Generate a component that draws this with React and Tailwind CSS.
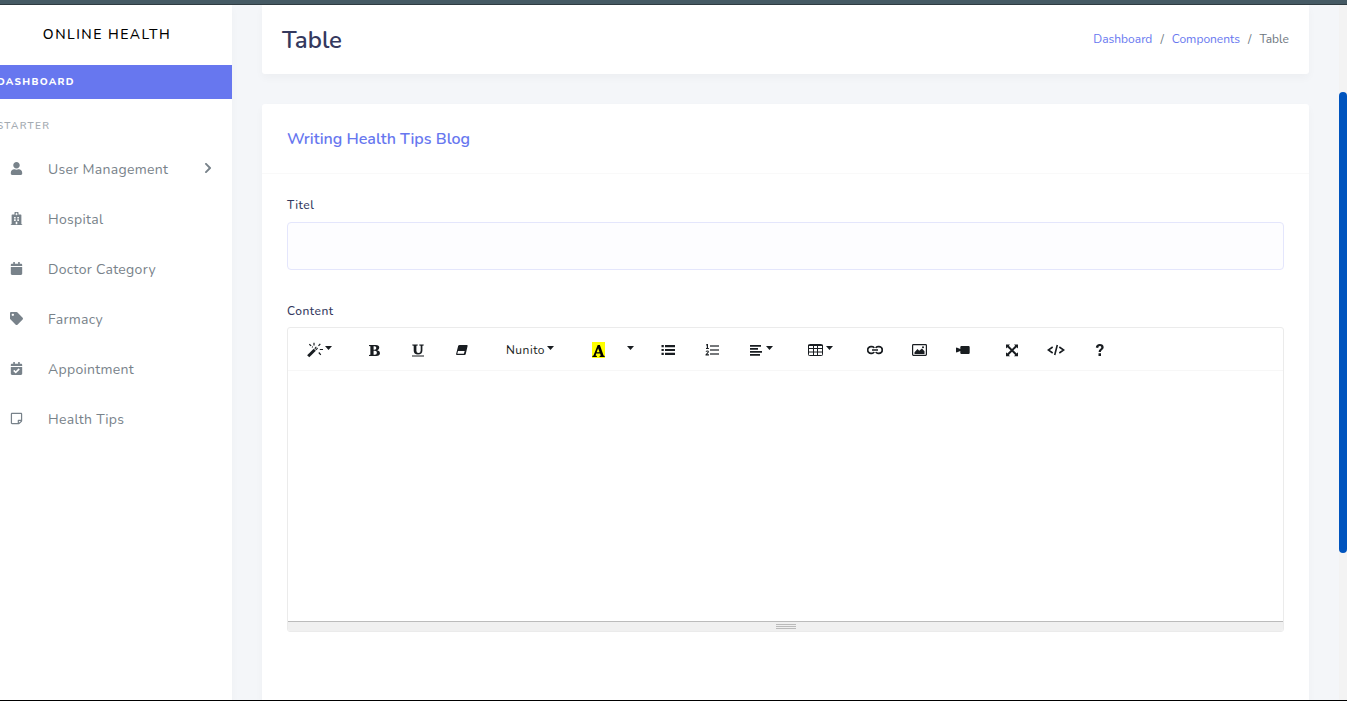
import React from "react";
import {
  FaUser,
  FaHospital,
  FaCalendar,
  FaTag,
  FaCalendarCheck,
  FaRegStickyNote,
  FaChevronRight,
} from "react-icons/fa";

const navItems = [
  { label: "User Management", icon: FaUser, expandable: true },
  { label: "Hospital", icon: FaHospital },
  { label: "Doctor Category", icon: FaCalendar },
  { label: "Farmacy", icon: FaTag },
  { label: "Appointment", icon: FaCalendarCheck },
  { label: "Health Tips", icon: FaRegStickyNote },
];

function Glyph({ children, className = "h-[14px] w-[14px]" }) {
  return (
    <svg viewBox="0 0 14 14" className={className} fill="currentColor" aria-hidden="true">
      {children}
    </svg>
  );
}

function Caret() {
  return (
    <svg viewBox="0 0 7 4" className="mb-1 h-1 w-[7px]" fill="currentColor" aria-hidden="true">
      <path d="M0 0h7L3.500 4z" />
    </svg>
  );
}

function Tool({ label, className = "w-11", children }) {
  return (
    <button
      type="button"
      aria-label={label}
      className={`flex h-8 items-center justify-center ${className}`}
    >
      {children}
    </button>
  );
}

function Group({ children }) {
  return <div className="flex">{children}</div>;
}

function Toolbar() {
  return (
    <div className="flex flex-wrap gap-[5px] border-b border-[#f7f7f7] px-1 pt-[6px] pb-1 text-[#191d21]">
      <Group>
        <Tool label="Style" className="w-[55px] gap-px">
          <svg viewBox="0 0 17 16" className="h-4 w-[17px]" fill="none" stroke="currentColor" aria-hidden="true">
            <path d="M1.200 14.300 7.800 7.700" strokeWidth="3" />
            <path d="M8.300 7.200 10 5.500" strokeWidth="2.800" />
            <path d="M8.600 6.900 10 5.500" stroke="white" strokeWidth="1" />
            <path d="M7 .8v2.700M2.300 2.300l1.900 1.600M13.300 1.800l-1.800 2M12.800 7.500h3.200M11.800 10.500l2 2.300M5 4.700l.8.600" strokeWidth="1.200" />
          </svg>
          <Caret />
        </Tool>
      </Group>
      <Group>
        <Tool label="Bold">
          <span className="font-['Liberation_Serif',serif] text-base font-black">
            <svg viewBox="0 0 12 12" className="h-[11px] w-[11px]" fill="currentColor" aria-hidden="true">
              <path
                fillRule="evenodd"
                d="M0 0h7.500Q11.200 0 11.200 2.900q0 2-2.200 2.700Q12 6.200 12 8.700 12 12 7.800 12H0v-1l1.500-.4V1.400L0 1zM5 1.300v3.800h1.200Q8 5.100 8 3.200 8 1.300 6.200 1.300zM5 6.400v4.200h1.500q2.100 0 2.100-2.100T6.500 6.400z"
              />
            </svg>
          </span>
        </Tool>
        <Tool label="Underline">
          <svg viewBox="0 0 12 13" className="h-[13px] w-3" fill="currentColor" aria-hidden="true">
            <path d="M.3.500h5.400v1l-1.300.3v5q0 2.300 2 2.300 2.300 0 2.300-2.500V1.800L7.300 1.500v-1h4.400v1l-1.300.3v4.700q0 3.900-4.400 3.900-4.300 0-4.300-3.600v-5L.3 1.500zM0 11.500h12v1H0z" />
          </svg>
        </Tool>
        <Tool label="Remove font style">
          <Glyph>
            <path
              fillRule="evenodd"
              d="M4.700 2h7.200q1 0 .7 1L10.700 11.200q-.3.800-1.200.8H1.900q-1 0-.8-1L3.200 2.800Q3.600 2 4.700 2zM3 8 2.300 10.800h6.500L9.700 8z"
            />
          </Glyph>
        </Tool>
      </Group>
      <Group>
        <Tool label="Font family" className="w-[82px] gap-[2px] text-xs tracking-[0.5px]">
          Nunito
          <Caret />
        </Tool>
      </Group>
      <Group>
        <Tool label="Recent color">
          <span className="mb-px flex h-4 w-[13px] items-end justify-center bg-[#ffff00] text-black">
            <svg viewBox="0 0 13 14" className="h-[14px] w-[13px]" fill="currentColor" aria-hidden="true">
              <path
                fillRule="evenodd"
                d="M5.700 1h2.200l3.700 10.500 1.100.4v1H7.600v-1l1.200-.3-.7-2H4.200l-.6 1.900 1.300.4v1H.3v-1l1.200-.4zM6.100 4.300 4.700 8.300h2.900z"
              />
            </svg>
          </span>
        </Tool>
        <Tool label="More color" className="w-[21px]">
          <Caret />
        </Tool>
      </Group>
      <Group>
        <Tool label="Unordered list">
          <Glyph>
            <path d="M4 2h10v2.200H4zM4 5.900h10v2.200H4zM4 9.800h10V12H4zM.5 2h2.300v2.200H.5zM.5 5.900h2.300v2.200H.5zM.5 9.800h2.300V12H.5z" />
          </Glyph>
        </Tool>
        <Tool label="Ordered list">
          <Glyph>
            <path d="M5 2h9v2H5zM5 6h9v2H5zM5 10h9v2H5z" opacity=".6" />
            <path d="M1 1.600 2.200 1H3v4h.9v1H1V5h.8V2.300L1 2.600zM.6 8.600q.4-1.100 1.800-1.100 1.500 0 1.500 1.200 0 .9-1.700 2.500H4v1.200H.5v-1q2.200-2 2.200-2.600 0-.5-.5-.5-.5 0-.7.600z" />
          </Glyph>
        </Tool>
        <Tool label="Paragraph" className="w-[53px] gap-[3px]">
          <Glyph>
            <path d="M1 2h11v1.800H1zM1 5h8v1.800H1zM1 8h12v1.800H1zM1 11h10v1.800H1z" />
          </Glyph>
          <Caret />
        </Tool>
      </Group>
      <Group>
        <Tool label="Table" className="w-14 gap-[3px]">
          <svg viewBox="0 0 15 12" className="h-3 w-[15px]" fill="none" stroke="currentColor" aria-hidden="true">
            <rect x=".5" y=".5" width="14" height="11" rx=".8" />
            <path d="M5.500 0v12M9.500 0v12M0 1.500h15M0 4.500h15M0 8h15" />
          </svg>
          <Caret />
        </Tool>
      </Group>
      <Group>
        <Tool label="Link">
          <svg viewBox="0 0 16 10" className="h-[10px] w-4" fill="none" stroke="currentColor" strokeWidth="1.700" aria-hidden="true">
            <path d="M7.200 3Q6.600 1.700 5 1.700H4a3.200 3.200 0 0 0 0 6.600h1q1.600 0 2.200-1.300M8.800 7q.6 1.300 2.200 1.300h1a3.200 3.200 0 0 0 0-6.600h-1Q9.400 1.700 8.800 3M5 5h6" />
          </svg>
        </Tool>
        <Tool label="Picture">
          <svg viewBox="0 0 15 12" className="h-3 w-[15px]" fill="currentColor" aria-hidden="true">
            <rect x=".6" y=".6" width="13.800" height="10.800" rx=".8" fill="none" stroke="currentColor" strokeWidth="1.200" />
            <path d="M2.500 10V8.300L5.500 5l1.700 1.800L10 4.400l2.500 2.800V10z" />
            <circle cx="11" cy="3.300" r="1" />
          </svg>
        </Tool>
        <Tool label="Video">
          <Glyph>
            <path d="M5.500 3h7q1.200 0 1.200 1.200v5.600q0 1.200-1.200 1.200h-7q-1.200 0-1.200-1.200V8L.6 9.500Q0 9.500 0 8.800V5.200q0-.7.6-.7L4.300 6V4.200Q4.300 3 5.500 3z" />
          </Glyph>
        </Tool>
      </Group>
      <Group>
        <Tool label="Full screen">
          <Glyph>
            <path d="M1 1.500h4L3.800 2.800 7 6l3.200-3.200L9 1.500h4v4l-1.300-1.200L8.400 7.300l3.300 3.100L13 9.200v4H9l1.200-1.300L7 8.700l-3.200 3.200L5 13.200H1v-4l1.300 1.200 3.300-3.100-3.300-3L1 5.500z" />
          </Glyph>
        </Tool>
        <Tool label="Code view">
          <svg viewBox="0 0 18 12" className="h-3 w-[18px]" fill="none" stroke="currentColor" strokeWidth="1.600" aria-hidden="true">
            <path d="M5.700 3 1.300 6l4.400 3M12.300 3l4.400 3-4.400 3M10.300 1 7.700 11" />
          </svg>
        </Tool>
        <Tool label="Help">
          <Glyph>
            <path d="M2.800 4.500Q3.200 1 6.800 1t3.900 3.200q0 1.700-1.700 2.800-1.200.8-1.200 2H5.600q0-2 1.500-3 1.200-.8 1.200-1.700Q8.300 3 6.800 3T5.200 5zM5.500 10.300H8V13H5.500z" />
          </Glyph>
        </Tool>
      </Group>
    </div>
  );
}

function Sidebar() {
  return (
    <aside className="-ml-[18px] w-[250px] shrink-0 bg-white shadow-[0_4px_8px_rgba(0,0,0,0.03)]">
      <a
        href="#home"
        className="flex h-[60px] items-center justify-center text-sm font-medium tracking-[1.5px] text-black uppercase"
      >
        Online Health
      </a>
      <a
        href="#dashboard"
        className="flex h-[34px] items-center bg-[#6777ef] px-[15px] text-[10px] font-extrabold tracking-[1.3px] text-white uppercase"
      >
        Dashboard
      </a>
      <h2 className="flex h-[46px] items-center px-[15px] pt-2 text-[10px] font-semibold tracking-[1.3px] text-[#a4abb2] uppercase">
        Starter
      </h2>
      <nav>
        <ul>
          {navItems.map(({ label, icon: Icon, expandable }) => (
            <li key={label}>
              <a href="#nav" className="flex h-[50px] items-center pr-5 pl-7 text-[#78828a]">
                <Icon className="mr-[25px] mb-1 h-[13px] w-[13px]" />
                <span className="text-sm tracking-[0.3px]">{label}</span>
                {expandable && <FaChevronRight className="mb-1 ml-auto h-3 w-2" />}
              </a>
            </li>
          ))}
        </ul>
      </nav>
    </aside>
  );
}

export default function App() {
  return (
    <div className="flex h-screen flex-col overflow-hidden border-b border-black bg-[#f4f6f9] font-['Nunito','Open_Sans',sans-serif]">
      <div className="h-[5px] shrink-0 border-b border-[#2f3c42] bg-[#455a64]" />
      <div className="flex min-h-0 flex-1">
        <Sidebar />
        <main className="flex min-w-0 flex-1 flex-col gap-[30px] px-[30px]">
          <header className="flex h-[69px] shrink-0 items-center justify-between rounded-b-[3px] bg-white px-5 shadow-[0_4px_8px_rgba(0,0,0,0.03)]">
            <h1 className="text-2xl font-semibold text-[#34395e]">Table</h1>
            <nav aria-label="Breadcrumb">
              <ol className="flex gap-2 pb-px text-xs text-[#6c757d]">
                <li>
                  <a href="#dashboard" className="text-[#6777ef]">Dashboard</a>
                </li>
                <li aria-hidden="true">/</li>
                <li>
                  <a href="#components" className="text-[#6777ef]">Components</a>
                </li>
                <li aria-hidden="true">/</li>
                <li>Table</li>
              </ol>
            </nav>
          </header>

          <section className="flex-1 rounded-t-[3px] bg-white shadow-[0_4px_8px_rgba(0,0,0,0.03)]">
            <div className="flex h-[70px] items-center border-b border-[#f9f9f9] px-[25px]">
              <h2 className="text-base font-semibold text-[#6777ef]">Writing Health Tips Blog</h2>
            </div>
            <form className="px-[25px] pt-[22px]">
              <label htmlFor="title" className="block text-xs leading-[18px] font-medium tracking-[0.5px] text-[#34395e]">
                Titel
              </label>
              <input
                id="title"
                type="text"
                className="mt-2 block h-12 w-full rounded border border-[#e4e6fc] bg-[#fdfdff] px-4 text-sm outline-none"
              />
              <label htmlFor="content" className="mt-8 block text-xs leading-[18px] font-medium tracking-[0.5px] text-[#34395e]">
                Content
              </label>
              <div className="mt-[7px] overflow-hidden rounded-[3px] border border-[#ebebeb]">
                <Toolbar />
                <textarea id="content" className="block h-[250px] w-full resize-none p-2 text-sm outline-none" />
                <div className="flex h-[10px] flex-col items-center gap-px border-t border-[#bbbbbb] bg-[#f0f0f0] pt-[2px]">
                  <span className="h-0 w-5 border-t border-[#bbbbbb]" />
                  <span className="h-0 w-5 border-t border-[#bbbbbb]" />
                  <span className="h-0 w-5 border-t border-[#bbbbbb]" />
                </div>
              </div>
            </form>
          </section>
        </main>
        <div className="flex w-2 shrink-0 flex-col bg-[#f3f3f3]" aria-hidden="true">
          <div className="grow-[87]" />
          <div className="grow-[461] rounded bg-[#0054be]" />
          <div className="grow-[147]" />
        </div>
      </div>
    </div>
  );
}
